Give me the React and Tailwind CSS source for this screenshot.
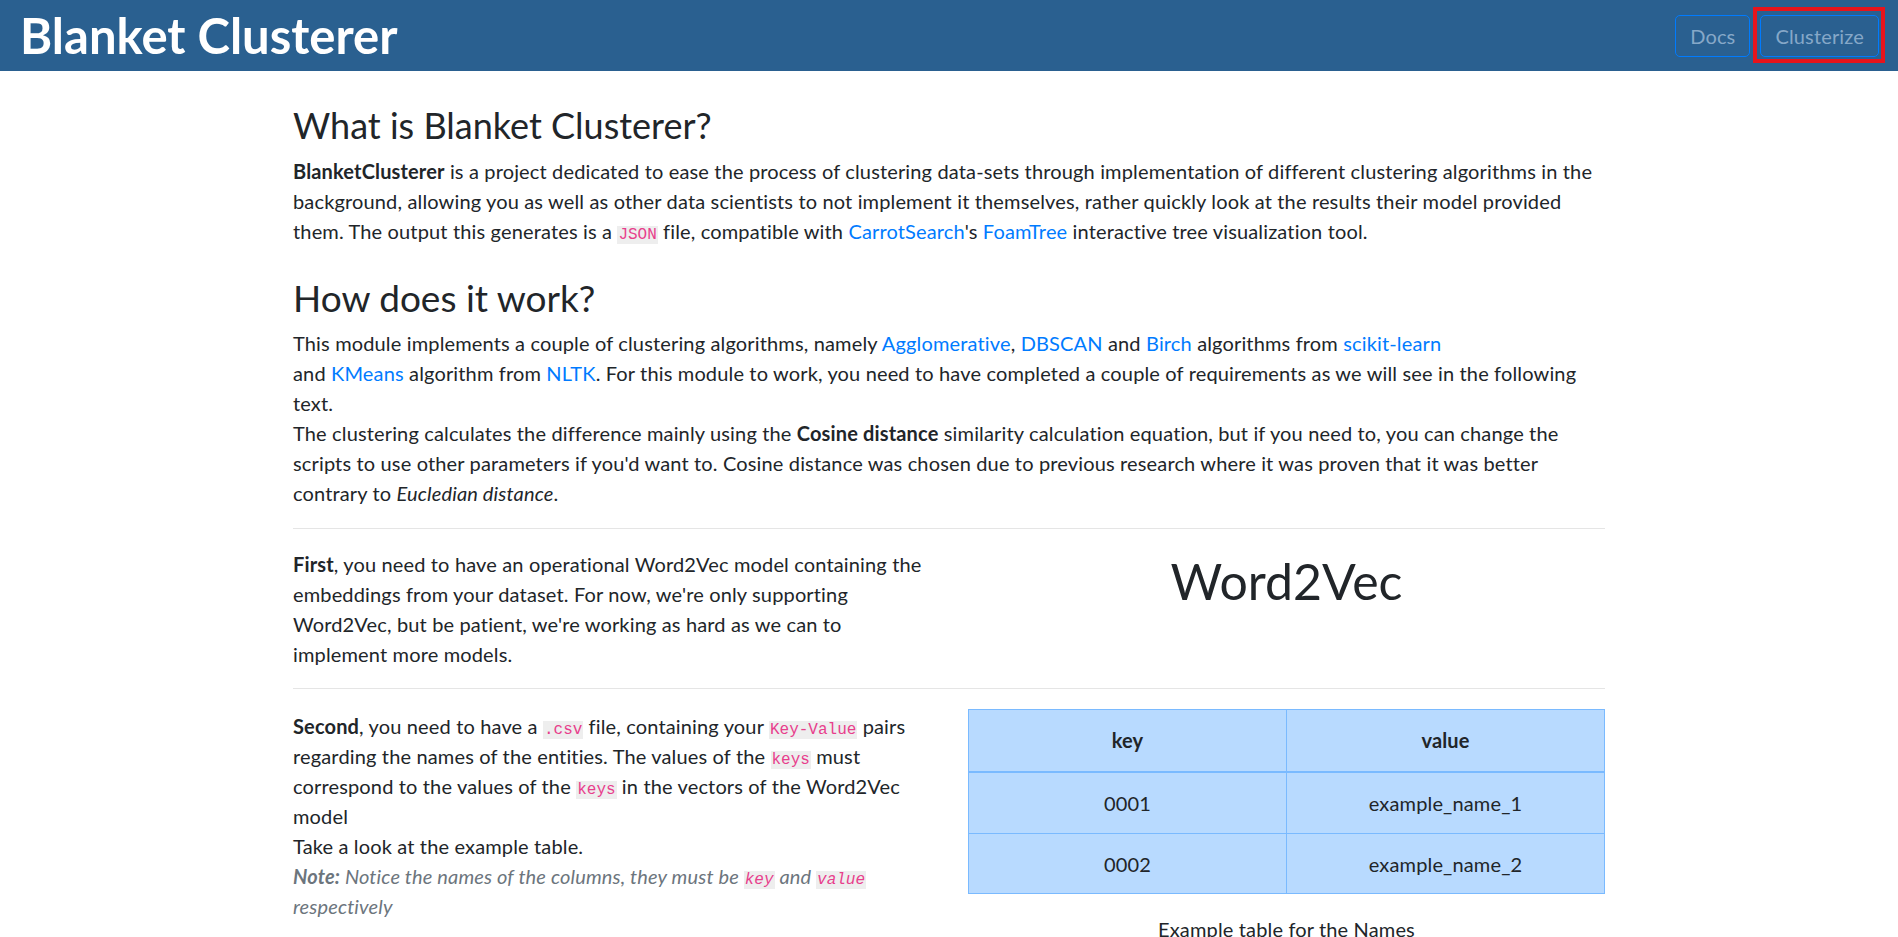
import React from "react";

const font = { fontFamily: "Lato, 'Liberation Sans', sans-serif" };

function Code({ children }) {
  return (
    <code className="bg-[#eeeeee] px-px text-[16px] leading-none tracking-normal text-[#e83e8c] font-['Liberation_Mono',monospace]">
      {children}
    </code>
  );
}

function A({ children }) {
  return <a href="#" className="text-[#007bff]">{children}</a>;
}

export default function App() {
  return (
    <div className="min-h-[937px] bg-white text-[#212529] text-[20px] leading-[30px] tracking-[0.15px]" style={font}>
      {/* Navbar */}
      <header className="flex h-[71px] items-center justify-between bg-[#2a6090] pl-5 pr-[19px]">
        <h1 className="text-[49px] font-bold leading-none tracking-normal text-white">Blanket Clusterer</h1>
        <nav className="flex items-center gap-[10px]">
          <button className="h-[42px] rounded-[5px] border border-[#007bff] px-[14px] text-[20px] text-[#86a8c8]">
            Docs
          </button>
          <button className="relative h-[42px] rounded-[5px] border border-[#007bff] px-[14px] text-[20px] text-[#86a8c8]">
            Clusterize
            <span className="absolute -left-2 -right-[7px] -top-[9px] -bottom-[7px] border-4 border-[#e8141c]"></span>
          </button>
        </nav>
      </header>

      <main className="mx-auto w-[1312px]">
        <h2 className="mt-[30px] mb-[7px] text-[36px] leading-[48px] font-normal tracking-normal">What is Blanket Clusterer?</h2>
        <p className="mb-5">
          <b>BlanketClusterer</b> is a project dedicated to ease the process of clustering data-sets through
          implementation of different clustering algorithms in the background, allowing you as well as other data
          scientists to not implement it themselves, rather quickly look at the results their model provided them. The
          output this generates is a <Code>JSON</Code> file, compatible with <A>CarrotSearch</A>'s <A>FoamTree</A>{" "}
          interactive tree visualization tool.
        </p>

        <h2 className="mt-[28px] mb-[6px] text-[37px] leading-[48px] font-normal tracking-normal">How does it work?</h2>
        <p className="mb-5">
          This module implements a couple of clustering algorithms, namely <A>Agglomerative</A>, <A>DBSCAN</A> and{" "}
          <A>Birch</A> algorithms from <A>scikit-learn</A>
          <br />
          and <A>KMeans</A> algorithm from <A>NLTK</A>. For this module to work, you need to have completed a couple
          of requirements as we will see in the following text.
          <br />
          The clustering calculates the difference mainly using the <b>Cosine distance</b> similarity calculation
          equation, but if you need to, you can change the scripts to use other parameters if you'd want to. Cosine
          distance was chosen due to previous research where it was proven that it was better contrary to{" "}
          <i>Eucledian distance</i>.
        </p>

        <hr className="border-[#e5e5e5]" />

        <div className="grid grid-cols-2 gap-[38px] pt-5">
          <p className="mb-[19px]">
            <b>First</b>, you need to have an operational Word2Vec model containing the embeddings from your dataset.
            For now, we're only supporting Word2Vec, but be patient, we're working as hard as we can to implement
            more models.
          </p>
          <div className="text-center">
            <h1 className="mt-[2px] text-[50px] leading-[60px] font-normal tracking-normal">Word2Vec</h1>
          </div>
        </div>

        <hr className="border-[#e5e5e5]" />

        <div className="grid grid-cols-2 gap-[38px] pt-[22px]">
          <p>
            <b>Second</b>, you need to have a <Code>.csv</Code> file, containing your <Code>Key-Value</Code> pairs
            regarding the names of the entities. The values of the <Code>keys</Code> must correspond to the values of
            the <Code>keys</Code> in the vectors of the Word2Vec model
            <br />
            Take a look at the example table.
            <br />
            <i className="text-[#6c757d]">
              <b>Note:</b> Notice the names of the columns, they must be <Code>key</Code> and <Code>value</Code>{" "}
              respectively
            </i>
          </p>
          <div className="-mt-[2px] text-center">
            <table className="w-full table-fixed border-collapse bg-[#b8daff]">
              <thead>
                <tr className="h-[62px]">
                  <th className="border border-b-2 border-[#7abaff] font-bold">key</th>
                  <th className="border border-b-2 border-[#7abaff] font-bold">value</th>
                </tr>
              </thead>
              <tbody>
                <tr className="h-[62px]">
                  <td className="border border-[#7abaff]">0001</td>
                  <td className="border border-[#7abaff]">example_name_1</td>
                </tr>
                <tr className="h-[60px]">
                  <td className="border border-[#7abaff]">0002</td>
                  <td className="border border-[#7abaff]">example_name_2</td>
                </tr>
              </tbody>
            </table>
            <p className="mt-5">Example table for the Names</p>
          </div>
        </div>
      </main>
    </div>
  );
}
